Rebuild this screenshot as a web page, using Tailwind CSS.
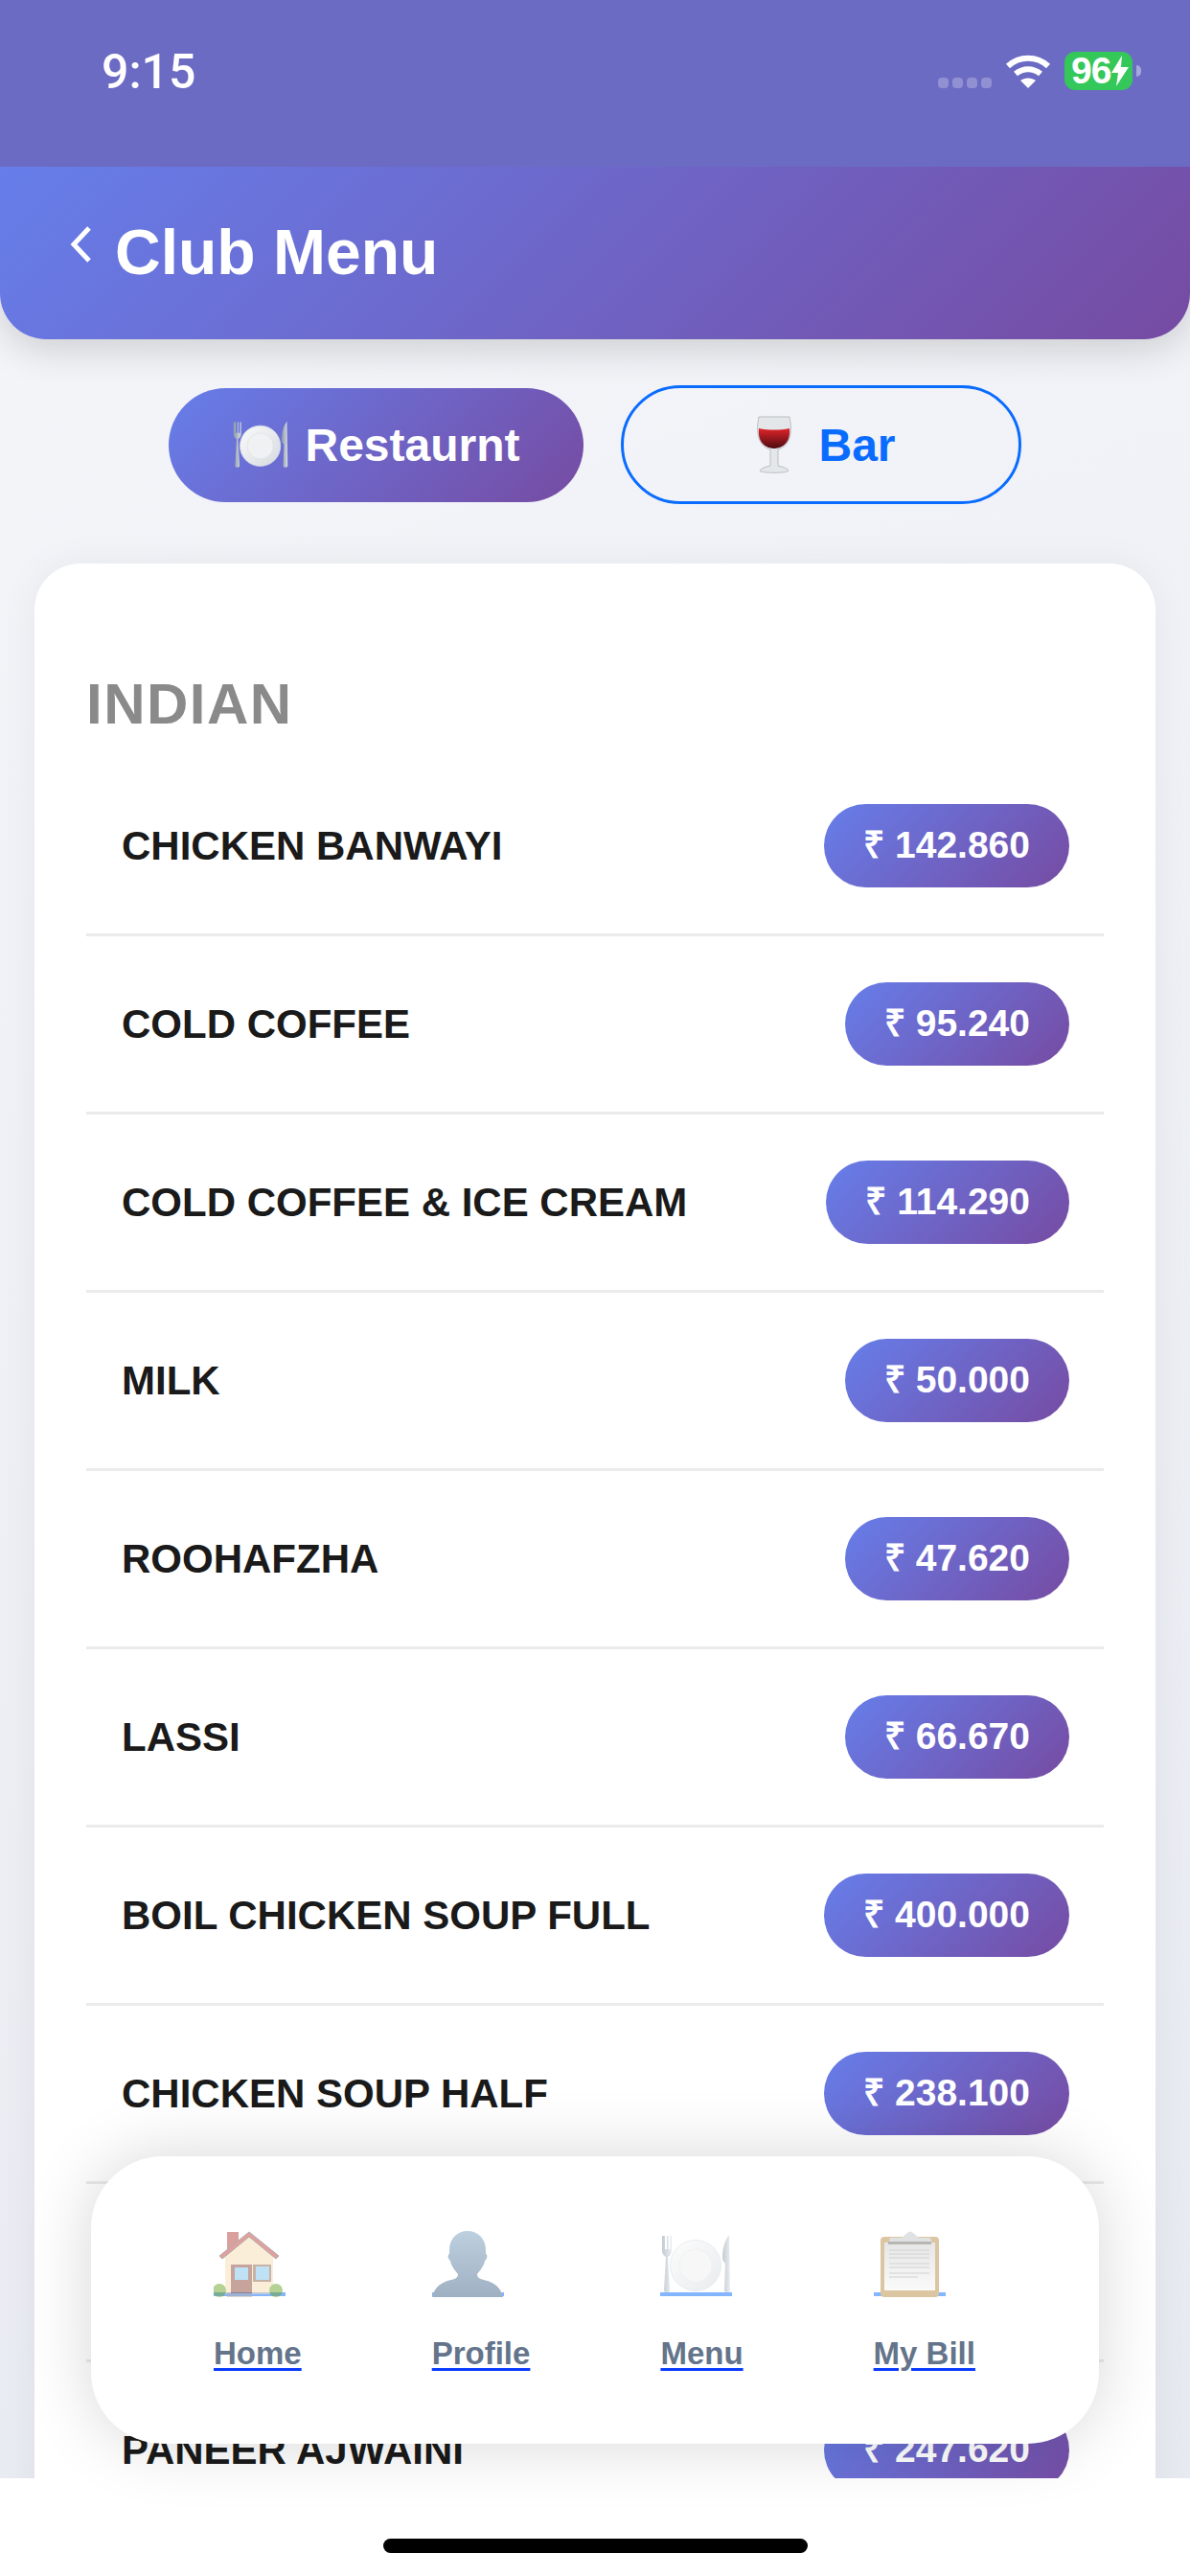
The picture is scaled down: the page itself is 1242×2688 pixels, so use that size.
<!DOCTYPE html>
<html lang="en">

<head>
  <meta charset="UTF-8">
  <title>Club Menu</title>
  <script src="https://cdn.jsdelivr.net/npm/@tailwindcss/browser@4"></script>
</head>

<body class="m-0">
  <svg width="0" height="0" class="absolute">
    <defs>
      <linearGradient id="plateFill" x1="0" y1="0" x2="1" y2="1">
        <stop offset="0" stop-color="#fbfbfb" />
        <stop offset="1" stop-color="#d5d9de" />
      </linearGradient>
      <linearGradient id="metal" x1="0" y1="0" x2="1" y2="0">
        <stop offset="0" stop-color="#8b98a8" />
        <stop offset="1" stop-color="#d6dde4" />
      </linearGradient>
      <linearGradient id="wine" x1="0" y1="0" x2="0" y2="1">
        <stop offset="0" stop-color="#e0242a" />
        <stop offset="1" stop-color="#4d0a10" />
      </linearGradient>
      <linearGradient id="bust" x1="0" y1="0" x2="0" y2="1">
        <stop offset="0" stop-color="#bdd0df" />
        <stop offset="1" stop-color="#9fb0c2" />
      </linearGradient>
      <linearGradient id="paper" x1="0" y1="0" x2="0" y2="1">
        <stop offset="0" stop-color="#e6e6e6" />
        <stop offset="1" stop-color="#fafafa" />
      </linearGradient>
      <symbol id="plate" viewBox="0 0 75 64">
        <path d="M2 2v15c0 4 2 6 4 7l-2 35c0 3 6 3 6 0L8 24c2-1 4-3 4-7V2h-1.500v14H8.500V2h-1.500v14H5V2z" fill="url(#metal)" />
        <circle cx="37" cy="33" r="26.500" fill="url(#plateFill)" stroke="#d3dde6" />
        <circle cx="37" cy="33" r="17" fill="#f0f1f2" stroke="#e0e3e6" />
        <path d="M72 1c-5 6-7 16-7 24 0 3 2 5 3 6l-1 28c0 3 6 3 6 0z" fill="url(#metal)" />
      </symbol>
    </defs>
  </svg>

  <div class="relative w-[1242px] h-[2688px] overflow-hidden flex flex-col bg-[linear-gradient(160deg,#f5f6fa,#e6e9f0)] font-['Liberation_Sans',Arial,sans-serif]">

    <!-- status bar -->
    <div class="relative z-10 h-[174px] shrink-0 bg-[#6c6bc4] text-white flex justify-between pl-[106px] pr-[51px] pt-[50px]">
      <span class="font-['Roboto',sans-serif] font-medium text-[50px] leading-[50px]">9:15</span>
      <div class="flex items-start">
        <div class="flex gap-[4px] mt-[31px] mr-[14px]">
          <span class="w-[11px] h-[11px] rounded-[4px] bg-white/25"></span>
          <span class="w-[11px] h-[11px] rounded-[4px] bg-white/25"></span>
          <span class="w-[11px] h-[11px] rounded-[4px] bg-white/25"></span>
          <span class="w-[11px] h-[11px] rounded-[4px] bg-white/25"></span>
        </div>
        <svg class="mt-[6px] mr-[14px]" width="48" height="36" viewBox="0 0 48 36" fill="none" stroke="white" stroke-width="6">
          <path d="M3 13c12-11 30-11 42 0" />
          <path d="M11 21c8-6.500 18-6.500 26 0" />
          <path d="M24 36l-8-8c4.500-3.500 11.500-3.500 16 0z" fill="white" stroke="none" />
        </svg>
        <div class="mt-[4px] w-[71px] h-[40px] rounded-[11px] bg-[#34c759] flex items-center pl-[7px] gap-[1px]">
          <span class="font-bold text-[39px] leading-[40px] tracking-[-1px]">96</span>
          <svg width="18" height="32" viewBox="0 0 18 32" fill="white">
            <path d="M11 0L0 18h7l-2 14L18 12h-8z" />
          </svg>
        </div>
        <span class="mt-[18px] ml-[4px] w-[5px] h-[12px] rounded-r-full bg-white/40"></span>
      </div>
    </div>

    <!-- header -->
    <div class="h-[180px] shrink-0 rounded-b-[48px] bg-[linear-gradient(135deg,#667eea,#764ba2)] shadow-[0_10px_40px_rgba(0,0,0,0.16)] text-white flex items-start pl-[72px] pt-[54px]">
      <svg class="mt-[8px] mr-[24px]" width="24" height="38" viewBox="0 0 24 38" fill="none" stroke="white" stroke-width="5">
        <path d="M21 2L5 19l16 17" />
      </svg>
      <h1 class="font-bold text-[66px] leading-[70px]">Club Menu</h1>
    </div>

    <!-- tabs -->
    <div class="flex justify-center items-center gap-[39px] mt-[48px] shrink-0">
      <button class="w-[433px] h-[119px] rounded-full bg-[linear-gradient(135deg,#667eea,#764ba2)] text-white font-bold text-[48px] leading-[54px] flex items-center justify-center gap-[16px]">
        <svg width="60" height="51"><use href="#plate" /></svg>
        <span class="pt-[2px]">Restaurnt</span>
      </button>
      <button class="w-[418px] h-[124px] pl-[10px] rounded-full border-[3px] border-[#0a6cff] text-[#0a6cff] font-bold text-[48px] leading-[54px] flex items-center justify-center gap-[27px]">
        <svg width="38" height="62" viewBox="0 0 38 62">
          <path d="M3 2h32c3 14 2 30-12 34v17c4 1 9 2 11 5 0 3-30 3-30 0 2-3 7-4 11-5V36C1 32 0 16 3 2z" fill="#e4e7ea" stroke="#b9bec4" />
          <path d="M3 14c10 2 22 2 32 0 1 11-3 20-16 21C6 34 2 25 3 14z" fill="url(#wine)" />
        </svg>
        <span class="pt-[2px]">Bar</span>
      </button>
    </div>

    <!-- menu card -->
    <div class="mx-[36px] mt-[62px] px-[54px] flex-1 min-h-0 overflow-hidden rounded-t-[48px] bg-white shadow-[0_0_40px_rgba(0,0,0,0.05)]">
      <h2 class="mt-[110px] mb-[19px] h-[74px] font-bold text-[60px] leading-[74px] text-[#8a8a8a] tracking-[1.500px]">INDIAN</h2>
      <ul>
        <li class="h-[186px] border-b-[3px] border-[#ebebeb] flex items-center justify-between pl-[37px] pr-[36px]">
          <span class="font-bold text-[42px] text-[#1a1a1a]">CHICKEN BANWAYI</span>
          <span class="h-[87px] px-[41px] rounded-full bg-[linear-gradient(135deg,#667eea,#764ba2)] text-white font-bold text-[39px] flex items-center">₹ 142.860</span>
        </li>
        <li class="h-[186px] border-b-[3px] border-[#ebebeb] flex items-center justify-between pl-[37px] pr-[36px]">
          <span class="font-bold text-[42px] text-[#1a1a1a]">COLD COFFEE</span>
          <span class="h-[87px] px-[41px] rounded-full bg-[linear-gradient(135deg,#667eea,#764ba2)] text-white font-bold text-[39px] flex items-center">₹ 95.240</span>
        </li>
        <li class="h-[186px] border-b-[3px] border-[#ebebeb] flex items-center justify-between pl-[37px] pr-[36px]">
          <span class="font-bold text-[42px] text-[#1a1a1a]">COLD COFFEE &amp; ICE CREAM</span>
          <span class="h-[87px] px-[41px] rounded-full bg-[linear-gradient(135deg,#667eea,#764ba2)] text-white font-bold text-[39px] flex items-center">₹ 114.290</span>
        </li>
        <li class="h-[186px] border-b-[3px] border-[#ebebeb] flex items-center justify-between pl-[37px] pr-[36px]">
          <span class="font-bold text-[42px] text-[#1a1a1a]">MILK</span>
          <span class="h-[87px] px-[41px] rounded-full bg-[linear-gradient(135deg,#667eea,#764ba2)] text-white font-bold text-[39px] flex items-center">₹ 50.000</span>
        </li>
        <li class="h-[186px] border-b-[3px] border-[#ebebeb] flex items-center justify-between pl-[37px] pr-[36px]">
          <span class="font-bold text-[42px] text-[#1a1a1a]">ROOHAFZHA</span>
          <span class="h-[87px] px-[41px] rounded-full bg-[linear-gradient(135deg,#667eea,#764ba2)] text-white font-bold text-[39px] flex items-center">₹ 47.620</span>
        </li>
        <li class="h-[186px] border-b-[3px] border-[#ebebeb] flex items-center justify-between pl-[37px] pr-[36px]">
          <span class="font-bold text-[42px] text-[#1a1a1a]">LASSI</span>
          <span class="h-[87px] px-[41px] rounded-full bg-[linear-gradient(135deg,#667eea,#764ba2)] text-white font-bold text-[39px] flex items-center">₹ 66.670</span>
        </li>
        <li class="h-[186px] border-b-[3px] border-[#ebebeb] flex items-center justify-between pl-[37px] pr-[36px]">
          <span class="font-bold text-[42px] text-[#1a1a1a]">BOIL CHICKEN SOUP FULL</span>
          <span class="h-[87px] px-[41px] rounded-full bg-[linear-gradient(135deg,#667eea,#764ba2)] text-white font-bold text-[39px] flex items-center">₹ 400.000</span>
        </li>
        <li class="h-[186px] border-b-[3px] border-[#ebebeb] flex items-center justify-between pl-[37px] pr-[36px]">
          <span class="font-bold text-[42px] text-[#1a1a1a]">CHICKEN SOUP HALF</span>
          <span class="h-[87px] px-[41px] rounded-full bg-[linear-gradient(135deg,#667eea,#764ba2)] text-white font-bold text-[39px] flex items-center">₹ 238.100</span>
        </li>
        <!-- this row sits fully behind the floating nav -->
        <li class="h-[186px] border-b-[3px] border-[#ebebeb]"></li>
        <li class="h-[186px] border-b-[3px] border-[#ebebeb] flex items-center justify-between pl-[37px] pr-[36px]">
          <span class="font-bold text-[42px] text-[#1a1a1a]">PANEER AJWAINI</span>
          <span class="h-[87px] px-[41px] rounded-full bg-[linear-gradient(135deg,#667eea,#764ba2)] text-white font-bold text-[39px] flex items-center">₹ 247.620</span>
        </li>
      </ul>
    </div>

    <!-- white strip with home indicator -->
    <div class="absolute left-0 right-0 bottom-0 h-[102px] bg-white flex justify-center pt-[63px]">
      <span class="w-[443px] h-[15px] rounded-full bg-black"></span>
    </div>

    <!-- floating nav -->
    <nav class="absolute left-[95px] top-[2250px] w-[1052px] h-[300px] rounded-[75px] bg-white shadow-[0_0_70px_rgba(0,0,0,0.16)] flex justify-between pl-[128px] pr-[129px] pt-[78px]">
      <a class="flex flex-col items-start">
        <span class="relative w-[75px] h-[70px]">
          <span class="absolute left-0 right-0 bottom-[2px] h-[4px] bg-[#0a6cff]/50"></span>
          <svg class="absolute inset-0 opacity-50" width="75" height="70" viewBox="0 0 75 70">
            <rect x="14" y="1" width="12" height="20" fill="#b5443c" />
            <path d="M12 24L37 6l25 18v42H12z" fill="#f8dfb4" />
            <path d="M6 26L37 1l31 25-3 3-28-23L9 29z" fill="#c4423f" stroke="#5f5f5f" stroke-width="1" />
            <rect x="18" y="35" width="22" height="31" fill="#8f4a3a" />
            <rect x="22" y="38" width="14" height="13" fill="#7fc4ee" />
            <rect x="41" y="35" width="19" height="18" fill="#8f6a50" />
            <rect x="44" y="37" width="14" height="14" fill="#7fc4ee" />
            <circle cx="6" cy="62" r="7" fill="#6fa52c" />
            <circle cx="65" cy="62" r="7" fill="#6fa52c" />
            <rect x="14" y="65" width="26" height="4" fill="#b5b0a8" />
          </svg>
        </span>
        <span class="mt-[39px] font-bold text-[33px] leading-[38px] text-[#64748b] underline decoration-[#0a3cff] decoration-[3px] underline-offset-[4px]">Home</span>
      </a>
      <a class="flex flex-col items-start">
        <span class="relative w-[75px] h-[70px]">
          <span class="absolute left-0 right-0 bottom-[2px] h-[4px] bg-[#0a6cff]/50"></span>
          <svg class="absolute inset-0" width="75" height="70" viewBox="0 0 75 70">
            <path d="M37 0c11 0 19 8 19 20 0 2 0 3 0 4 2 0 2 5-1 7-1 6-5 10-8 14 0 3 2 5 7 6 9 2 17 6 20 18H0c3-12 11-16 20-18 5-1 7-3 7-6-3-4-7-8-8-14-3-2-3-7-1-7 0-1 0-2 0-4C18 8 26 0 37 0z" fill="url(#bust)" />
          </svg>
        </span>
        <span class="mt-[39px] font-bold text-[33px] leading-[38px] text-[#64748b] underline decoration-[#0a3cff] decoration-[3px] underline-offset-[4px]">Profile</span>
      </a>
      <a class="flex flex-col items-start">
        <span class="relative w-[75px] h-[70px]">
          <span class="absolute left-0 right-0 bottom-[2px] h-[4px] bg-[#0a6cff]/50"></span>
          <svg class="absolute left-0 top-[3px] opacity-50" width="75" height="64"><use href="#plate" /></svg>
        </span>
        <span class="mt-[39px] font-bold text-[33px] leading-[38px] text-[#64748b] underline decoration-[#0a3cff] decoration-[3px] underline-offset-[4px]">Menu</span>
      </a>
      <a class="flex flex-col items-start">
        <span class="relative w-[75px] h-[70px]">
          <span class="absolute left-0 right-0 bottom-[2px] h-[4px] bg-[#0a6cff]/50"></span>
          <svg class="absolute inset-0" width="75" height="72" viewBox="0 0 75 72">
            <rect x="7" y="6" width="61" height="63" rx="4" fill="#dcc6a2" />
            <rect x="11" y="12" width="53" height="50" fill="url(#paper)" />
            <path d="M16 20h42M16 24h42M16 28h42M16 34h42M16 38h42M16 44h42M16 48h30" stroke="#d2d2d2" stroke-width="1" />
            <path d="M15 14l2-7h12l6-5c2-2 4-2 6 0l6 5h12l2 7z" fill="#dfe1e3" />
            <rect x="15" y="11" width="45" height="3" fill="#b8b6b2" />
          </svg>
        </span>
        <span class="mt-[39px] font-bold text-[33px] leading-[38px] text-[#64748b] underline decoration-[#0a3cff] decoration-[3px] underline-offset-[4px]">My Bill</span>
      </a>
    </nav>
  </div>
</body>

</html>
